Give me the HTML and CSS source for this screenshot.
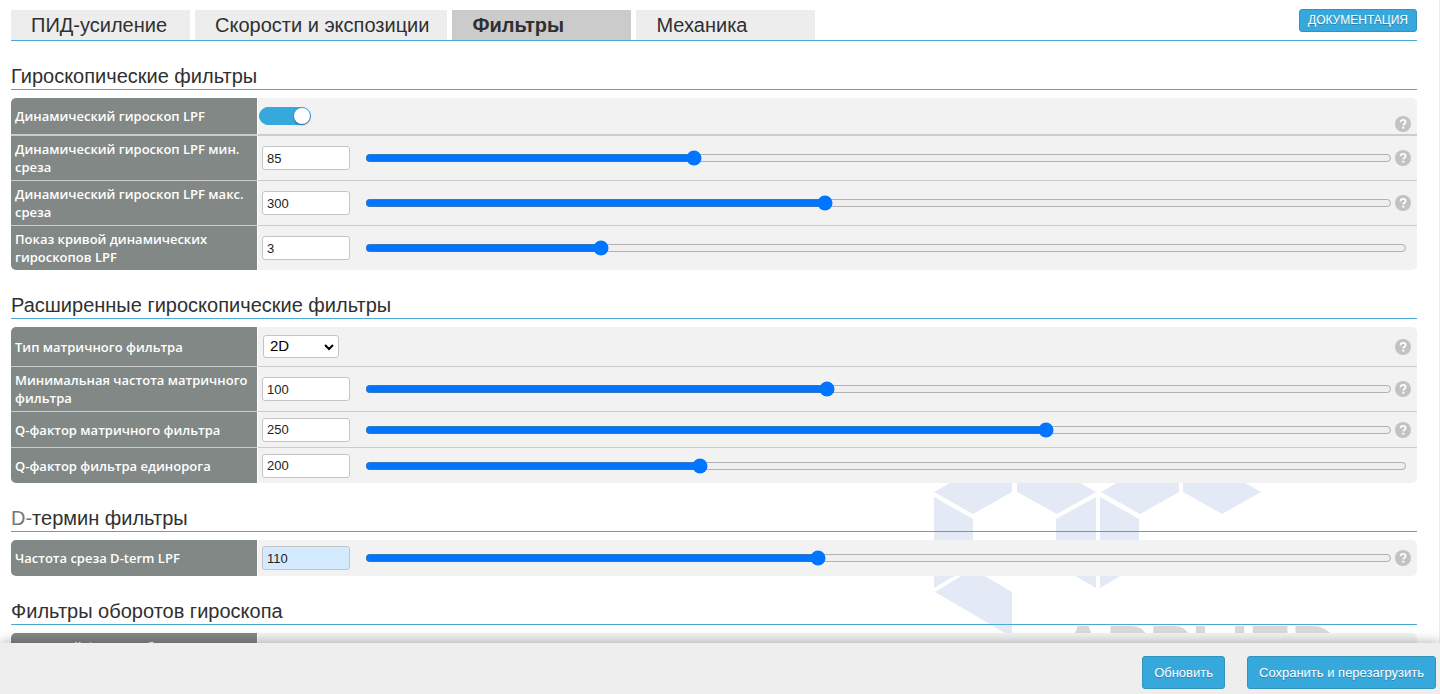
FILE: index.html
```html
<!DOCTYPE html>
<html lang="ru">
<head>
<meta charset="utf-8">
<title>Фильтры</title>
<link rel="stylesheet" href="styles.css">
</head>
<body>
<svg class="symbols" aria-hidden="true">
  <symbol id="help" viewBox="0 0 16 16">
    <circle cx="8" cy="8" r="8" fill="#c2c2c2"/>
    <path d="M5.6 6.2C5.6 4.6 6.6 3.8 8.1 3.8s2.5.8 2.5 2.1c0 1.8-2.3 1.8-2.3 3.6" fill="none" stroke="#fff" stroke-width="1.8"/>
    <rect x="7.3" y="10.7" width="2" height="2" fill="#fff"/>
  </symbol>
</svg>
<main class="content">
  <svg class="watermark" viewBox="0 0 410 230" aria-hidden="true">
    <g fill="#e3e9f5">
      <path d="M4 42L43 64L82 42V20H43z"/>
      <path d="M87 42L127 64L166 42L127 20H87z"/>
      <path d="M171 42L210 64L249 42V20H210z"/>
      <path d="M253 42L292 64L331 42L292 20H253z"/>
      <path d="M4 47L43 69V115L4 138z"/>
      <path d="M126 69L166 47V138L126 115z"/>
      <path d="M170 47L209 69V115L170 138z"/>
      <path d="M5 142L43 119L82 142V183H75z"/>
    </g>
    <text class="watermark-text" x="130" y="221">APPLIED</text>
  </svg>
  <header class="topbar">
    <nav class="tabs">
      <a class="tab" href="#pid">ПИД-усиление</a>
      <a class="tab" href="#rates">Скорости и экспозиции</a>
      <a class="tab tab-active" href="#filters">Фильтры</a>
      <a class="tab" href="#mechanics">Механика</a>
    </nav>
    <button class="docs" type="button">ДОКУМЕНТАЦИЯ</button>
  </header>

  <h2 class="title">Гироскопические фильтры</h2>
  <table class="settings">
    <tr class="row-switch">
      <th scope="row"><label for="dyn">Динамический гироскоп LPF</label></th>
      <td><div class="field field-switch"><input class="switch" id="dyn" type="checkbox" checked><svg class="help help-low"><use href="#help"/></svg></div></td>
    </tr>
    <tr class="row-double">
      <th scope="row"><label for="lpf-min">Динамический гироскоп LPF мин. среза</label></th>
      <td><div class="field"><input class="number" id="lpf-min" type="text" value="85"><input class="slider" type="range" aria-label="Динамический гироскоп LPF мин. среза" max="1000" value="318"><svg class="help"><use href="#help"/></svg></div></td>
    </tr>
    <tr class="row-double">
      <th scope="row"><label for="lpf-max">Динамический гироскоп LPF макс. среза</label></th>
      <td><div class="field"><input class="number" id="lpf-max" type="text" value="300"><input class="slider" type="range" aria-label="Динамический гироскоп LPF макс. среза" max="1000" value="447"><svg class="help"><use href="#help"/></svg></div></td>
    </tr>
    <tr class="row-double">
      <th scope="row"><label for="curve">Показ кривой динамических гироскопов LPF</label></th>
      <td><div class="field"><input class="number" id="curve" type="text" value="3"><input class="slider" type="range" aria-label="Показ кривой динамических гироскопов LPF" max="1000" value="222"></div></td>
    </tr>
  </table>

  <h2 class="title">Расширенные гироскопические фильтры</h2>
  <table class="settings">
    <tr class="row-select">
      <th scope="row"><label for="matrix">Тип матричного фильтра</label></th>
      <td><div class="field field-select"><span class="select-box"><select class="select" id="matrix"><option>2D</option><option>3D</option></select><svg class="chevron" viewBox="0 0 10 7"><path d="M1 1l4 4 4-4" fill="none" stroke="#000" stroke-width="2"/></svg></span><svg class="help"><use href="#help"/></svg></div></td>
    </tr>
    <tr class="row-double">
      <th scope="row"><label for="m-freq">Минимальная частота матричного фильтра</label></th>
      <td><div class="field"><input class="number" id="m-freq" type="text" value="100"><input class="slider" type="range" aria-label="Минимальная частота матричного фильтра" max="1000" value="449"><svg class="help"><use href="#help"/></svg></div></td>
    </tr>
    <tr>
      <th scope="row"><label for="m-q">Q-фактор матричного фильтра</label></th>
      <td><div class="field"><input class="number" id="m-q" type="text" value="250"><input class="slider" type="range" aria-label="Q-фактор матричного фильтра" max="1000" value="666"><svg class="help"><use href="#help"/></svg></div></td>
    </tr>
    <tr>
      <th scope="row"><label for="u-q">Q-фактор фильтра единорога</label></th>
      <td><div class="field"><input class="number" id="u-q" type="text" value="200"><input class="slider" type="range" aria-label="Q-фактор фильтра единорога" max="1000" value="319"></div></td>
    </tr>
  </table>

  <h2 class="title"><span class="title-light">D-</span>термин фильтры</h2>
  <table class="settings">
    <tr>
      <th scope="row"><label for="dterm">Частота среза D-term LPF</label></th>
      <td><div class="field"><input class="number number-changed" id="dterm" type="text" value="110"><input class="slider" type="range" aria-label="Частота среза D-term LPF" max="1000" value="440"><svg class="help"><use href="#help"/></svg></div></td>
    </tr>
  </table>

  <h2 class="title">Фильтры оборотов гироскопа</h2>
  <table class="settings">
    <tr class="row-double">
      <th scope="row"><label for="rpm">Активный фильтр оборотов гироскопа</label></th>
      <td><div class="field"><input class="number" id="rpm" type="text" value="0"></div></td>
    </tr>
  </table>
</main>
<footer class="toolbar">
  <button class="action" type="button">Обновить</button>
  <button class="action" type="button">Сохранить и перезагрузить</button>
</footer>
</body>
</html>
```
FILE: styles.css
```css
* {
  box-sizing: border-box;
}

body {
  margin: 0;
  height: 100vh;
  display: flex;
  flex-direction: column;
  background: #fff;
  color: #303030;
  font-family: "Liberation Sans", Arial, sans-serif;
}

.symbols {
  position: absolute;
  width: 0;
  height: 0;
}

.content {
  flex: 1;
  min-height: 0;
  overflow: hidden;
  position: relative;
  z-index: 0;
  padding: 9px 22px 0 11px;
  border-right: 1px solid #ececec;
}

/* Brand mark behind the settings */
.watermark {
  position: absolute;
  z-index: -1;
  right: 99px;
  bottom: -37px;
  width: 410px;
  height: 230px;
}

.watermark-text {
  font: bold 64px "Liberation Sans", Arial, sans-serif;
  fill: #d8d8d8;
}

.topbar {
  display: flex;
  justify-content: space-between;
  align-items: flex-start;
  height: 32px;
  border-bottom: 1px solid #4ba8d5;
}

.tabs {
  display: flex;
  align-self: flex-end;
  gap: 5px;
}

.tab {
  min-width: 179px;
  padding: 0 18px 0 20px;
  background: #ededed;
  color: #303030;
  font-size: 20px;
  line-height: 30px;
  text-decoration: none;
}

.tab-active {
  background: #cbcbcb;
  font-weight: bold;
}

.docs {
  height: 23px;
  padding: 0 8px 2px;
  border: 1px solid #3394b9;
  border-radius: 3px;
  background: #37a8db;
  color: #fff;
  font: 12px "Liberation Sans", Arial, sans-serif;
  text-shadow: 0 1px rgba(0, 0, 0, 0.25);
}

.title {
  margin: 24px 0 8px;
  padding-bottom: 2px;
  border-bottom: 1px solid #4ba8d5;
  font-size: 20px;
  font-weight: normal;
  line-height: 22px;
}

.title-light {
  color: #777;
}

.settings {
  width: 100%;
  table-layout: fixed;
  border-collapse: separate;
  border-spacing: 0;
  border-radius: 5px;
  overflow: hidden;
}

.settings tr {
  height: 36px;
}

.settings tr:last-child:not(:first-child) {
  height: 35px;
}

.settings .row-switch {
  height: 38px;
}

.settings .row-select {
  height: 40px;
}

.settings .row-double {
  height: 45px;
}

.settings .row-double:last-child:not(:first-child) {
  height: 44px;
}

.settings th,
.settings td {
  border-bottom: 1px solid #ccc;
  vertical-align: middle;
}

.settings .row-switch th,
.settings .row-switch td {
  border-bottom-width: 2px;
}

.settings tr:last-child th,
.settings tr:last-child td {
  border-bottom: 0;
}

.settings th {
  width: 247px;
  padding: 0 8px 0 4px;
  border-right: 1px solid #fff;
  background: #828885;
  color: #fff;
  font: 600 13px/18px "Open Sans", "Noto Sans", sans-serif;
  text-align: left;
}

.settings td {
  padding: 0;
  background: #f2f2f2;
}

.field {
  display: flex;
  align-items: center;
  padding: 0 6px 0 4px;
}

.field-switch {
  padding-left: 1px;
}

.field-select {
  padding-left: 5px;
}

.number {
  width: 88px;
  height: 24px;
  padding: 0 4px;
  border: 1px solid #c4c4c4;
  border-radius: 3px;
  background: #fff;
  color: #222;
  font: 13px "Liberation Sans", Arial, sans-serif;
}

.number-changed {
  background: #d4eaff;
}

.slider {
  flex: 1;
  min-width: 0;
  height: 16px;
  margin: 0 3px 0 15px;
}

.slider:last-child {
  margin-right: 4px;
}

.help {
  flex: none;
  width: 16px;
  height: 16px;
  margin-left: auto;
}

.help-low {
  align-self: flex-end;
  margin-top: 16px;
}

.switch {
  appearance: none;
  display: flex;
  justify-content: flex-end;
  width: 52px;
  height: 18px;
  margin: 0;
  border: 1px solid #37a8db;
  border-radius: 9px;
  background: #37a8db;
}

.switch::before {
  content: "";
  width: 16px;
  height: 16px;
  border-radius: 50%;
  background: #fff;
  box-shadow: 0 1px 2px rgba(0, 0, 0, 0.4);
}

.select-box {
  position: relative;
  display: flex;
}

.select {
  appearance: none;
  width: 76px;
  height: 23px;
  padding: 0 6px 2px;
  border: 1px solid #c4c4c4;
  border-radius: 3px;
  background: #fff;
  color: #000;
  font: 15px "Liberation Sans", Arial, sans-serif;
}

.chevron {
  position: absolute;
  right: 5px;
  top: 9px;
  width: 10px;
  height: 7px;
  pointer-events: none;
}

.toolbar {
  position: relative;
  z-index: 1;
  display: flex;
  justify-content: flex-end;
  align-items: center;
  gap: 22px;
  padding: 13px 4px 5px;
  background: #eee;
  box-shadow: 0 -2px 10px rgba(0, 0, 0, 0.25);
}

.action {
  height: 33px;
  padding: 0 11px;
  border: 1px solid #3394b9;
  border-radius: 3px;
  background: #37a8db;
  color: #fff;
  font: 13px "Liberation Sans", Arial, sans-serif;
  text-shadow: 0 1px rgba(0, 0, 0, 0.25);
}
```
